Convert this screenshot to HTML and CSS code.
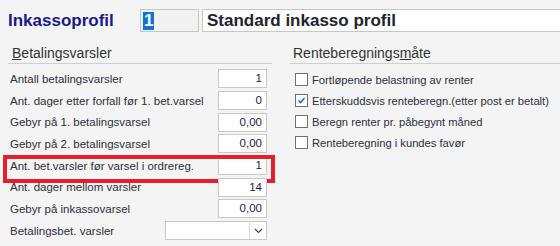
FILE: index.html
```html
<!DOCTYPE html>
<html lang="no">
<head>
<meta charset="UTF-8">
<meta name="viewport" content="width=device-width, initial-scale=1.0">
<title>Inkassoprofil</title>
<link rel="stylesheet" href="styles.css">
</head>
<body>
<div class="header">
  <div class="title">Inkassoprofil</div>
  <div class="code-box"><span class="selected">1</span></div>
  <div class="name-box">Standard inkasso profil</div>
</div>

<div class="columns">
  <div class="left-col">
    <div class="section-title"><u>B</u>etalingsvarsler</div>
    <div class="rows">
      <div class="row"><span class="label">Antall betalingsvarsler</span><span class="field">1</span></div>
      <div class="row"><span class="label">Ant. dager etter forfall før 1. bet.varsel</span><span class="field">0</span></div>
      <div class="row"><span class="label">Gebyr på 1. betalingsvarsel</span><span class="field">0,00</span></div>
      <div class="row"><span class="label">Gebyr på 2. betalingsvarsel</span><span class="field">0,00</span></div>
      <div class="row marked"><span class="label">Ant. bet.varsler før varsel i ordrereg.</span><span class="field">1</span></div>
      <div class="row"><span class="label">Ant. dager mellom varsler</span><span class="field">14</span></div>
      <div class="row"><span class="label">Gebyr på inkassovarsel</span><span class="field">0,00</span></div>
      <div class="row">
        <span class="label">Betalingsbet. varsler</span>
        <span class="combo">
          <span class="combo-text"></span>
          <span class="combo-btn">
            <svg width="9" height="6" viewBox="0 0 9 6"><polyline points="1,1 4.5,4.5 8,1" fill="none" stroke="#444" stroke-width="1.2"/></svg>
          </span>
        </span>
      </div>
    </div>
  </div>

  <div class="right-col">
    <div class="section-title">Renteberegnings<u>m</u>åte</div>
    <div class="checks">
      <div class="check-row"><span class="box"></span>Fortløpende belastning av renter</div>
      <div class="check-row"><span class="box">
        <svg width="11" height="11" viewBox="0 0 11 11"><polyline points="2.5,5.5 4.5,7.5 8.5,3" fill="none" stroke="#1f6fd0" stroke-width="1.6"/></svg>
      </span>Etterskuddsvis renteberegn.(etter post er betalt)</div>
      <div class="check-row"><span class="box"></span>Beregn renter pr. påbegynt måned</div>
      <div class="check-row"><span class="box"></span>Renteberegning i kundes favør</div>
    </div>
  </div>
</div>
</body>
</html>
```

FILE: styles.css
```css
body {
  margin: 0;
  background-color: #f4f4f4;
  font-family: "Liberation Sans", Arial, sans-serif;
  color: #2f2f3c;
  overflow: hidden;
}
.header {
  display: flex;
  align-items: center;
  padding-top: 9px;
  height: 23px;
}
.title {
  width: 132px;
  padding-left: 8px;
  font-weight: bold;
  font-size: 17px;
  color: #1b1b86;
}
.code-box {
  box-sizing: border-box;
  width: 59px;
  height: 23px;
  border: 1px solid #c6c6c6;
  background-color: #f1f1f1;
  padding: 2px 0 0 2px;
}
.selected {
  display: inline-block;
  background-color: #0a74d6;
  color: white;
  font-weight: bold;
  font-size: 17px;
  line-height: 18px;
  padding: 0 1px;
}
.name-box {
  box-sizing: border-box;
  flex: 1;
  margin-left: 3px;
  margin-right: -4px;
  height: 23px;
  border: 1px solid #c6c6c6;
  background-color: white;
  padding-left: 4px;
  font-weight: bold;
  font-size: 17px;
  line-height: 21px;
  color: #222230;
}
.columns {
  display: flex;
  padding-top: 12px;
}
.left-col {
  width: 264px;
  margin-left: 8px;
}
.right-col {
  flex: 1;
  margin-left: 18px;
}
.section-title {
  font-size: 14px;
  color: #333;
  padding-left: 4px;
  height: 19px;
  border-bottom: 1px solid #cfcfcf;
  line-height: 19px;
}
.right-col .section-title {
  padding-left: 3px;
}
.rows {
  padding-top: 4px;
}
.row {
  position: relative;
  display: flex;
  align-items: center;
  justify-content: space-between;
  height: 21.7px;
  padding-right: 5px;
}
.label {
  font-size: 11.5px;
  padding-left: 2px;
}
.field {
  box-sizing: border-box;
  width: 49px;
  height: 19px;
  border: 1px solid #c8c8c8;
  background-color: white;
  text-align: right;
  padding-right: 4px;
  font-size: 11.5px;
  line-height: 17px;
  color: #22224a;
}
.marked::after {
  content: "";
  position: absolute;
  left: -5px;
  top: 0;
  width: 264px;
  height: 20px;
  border: 4px solid #e51e2a;
}
.combo {
  box-sizing: border-box;
  display: flex;
  width: 102px;
  height: 19px;
  border: 1px solid #c8c8c8;
  background-color: white;
}
.combo-text {
  flex: 1;
}
.combo-btn {
  width: 16px;
  border-left: 1px solid #d8d8d8;
  display: flex;
  align-items: center;
  justify-content: center;
}
.checks {
  padding-top: 5px;
}
.check-row {
  display: flex;
  align-items: center;
  height: 21px;
  font-size: 11.2px;
  padding-left: 5px;
}
.box {
  box-sizing: border-box;
  width: 13px;
  height: 13px;
  border: 1px solid #6f6f6f;
  background-color: white;
  margin-right: 4px;
  display: flex;
  align-items: center;
  justify-content: center;
}
```
